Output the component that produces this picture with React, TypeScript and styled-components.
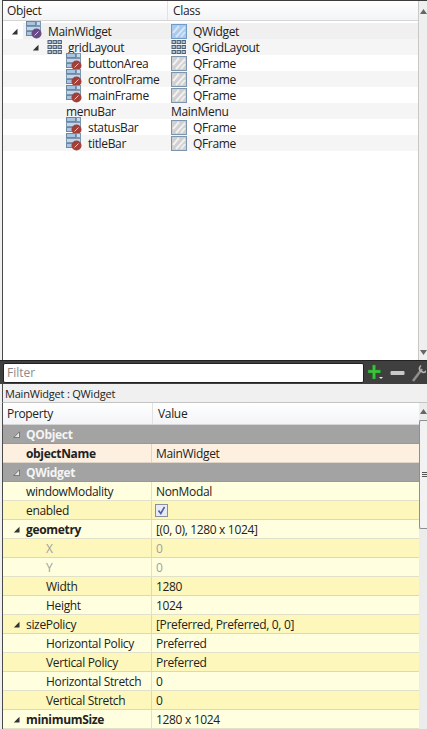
import styled, { createGlobalStyle } from 'styled-components';

const GlobalStyle = createGlobalStyle`
  html, body {
    margin: 0;
    padding: 0;
    background: #f0f0f0;
  }
  * {
    box-sizing: border-box;
  }
`;

const Page = styled.div`
  width: 427px;
  height: 729px;
  overflow: hidden;
  display: flex;
  flex-direction: column;
  font-family: "Open Sans", "Noto Sans", sans-serif;
  font-size: 12px;
  letter-spacing: -0.33px;
  color: #222;
  background: #f0f0f0;
`;

const TreePanel = styled.section`
  height: 360px;
  flex: none;
  display: flex;
  border-top: 1px solid #3c3c3c;
  border-left: 1px solid #4a4a4a;
  margin-left: 2px;
  background: #fff;
`;

const TreeBody = styled.div`
  flex: 1;
  min-width: 0;
  border-right: 1px solid #c8c8c8;
`;

const HeaderRow = styled.div<{ $split: number; $height: number }>`
  height: ${(p) => p.$height}px;
  display: grid;
  grid-template-columns: ${(p) => p.$split}px 1fr;
  align-items: center;
  background: linear-gradient(#ffffff, #f3f4f6);
  border-bottom: 1px solid #d5d5d5;
`;

const HeaderCell = styled.div`
  height: 100%;
  display: flex;
  align-items: center;
  padding-left: 5px;
  border-left: 1px solid #e2e2e2;
  &:first-child {
    border-left: none;
    padding-left: 4px;
  }
`;

const TreeList = styled.div`
  margin-top: 2px;
`;

const TreeRow = styled.div`
  height: 16px;
  display: grid;
  grid-template-columns: 164px 1fr;
  align-items: center;
  &:nth-child(even) {
    background: #f5f5f5;
  }
  &:first-child {
    background: linear-gradient(to right, #fff 20px, #f0f0f0 20px);
  }
`;

const ObjectCell = styled.div<{ $indent: number }>`
  display: flex;
  align-items: center;
  height: 16px;
  padding-left: ${(p) => p.$indent}px;
  white-space: nowrap;
`;

const ClassCell = styled.div`
  display: flex;
  align-items: center;
  height: 16px;
  padding-left: 4px;
  white-space: nowrap;
`;

const ArrowSlot = styled.span`
  width: 15px;
  flex: none;
  display: flex;
  align-items: center;
`;

const IconLabel = styled.span`
  margin-left: 6px;
`;

const ScrollBar = styled.div`
  width: 8px;
  flex: none;
  background: #efefef;
  display: flex;
  flex-direction: column;
  justify-content: space-between;
  align-items: center;
  padding: 8px 0 5px;
`;

const FilterBar = styled.div`
  height: 24px;
  flex: none;
  display: flex;
  align-items: center;
  gap: 3px;
  padding-left: 3px;
  background: #3f3f3f;
  border-top: 1px solid #222;
  overflow: hidden;
`;

const FilterInput = styled.input`
  width: 361px;
  height: 20px;
  flex: none;
  border: 1px solid #222;
  border-radius: 2px;
  padding: 0 3px;
  font: inherit;
  background: #fff;
  &::placeholder {
    color: #8a8a8a;
  }
`;

const ToolIcons = styled.div`
  display: flex;
  align-items: center;
  gap: 7px;
`;

const TitleStrip = styled.div`
  height: 19px;
  flex: none;
  display: flex;
  align-items: center;
  padding-left: 2px;
  margin-left: 2px;
  font-size: 11px;
  letter-spacing: -0.2px;
  background: #f0f0f0;
  border-left: 1px solid #4a4a4a;
  border-bottom: 1px solid #c4c4c4;
`;

const PropertyPanel = styled.section`
  flex: 1;
  min-height: 0;
  display: flex;
  margin-left: 2px;
  border-left: 1px solid #4a4a4a;
  background: #fff;
`;

const PropertyBody = styled.div`
  flex: 1;
  min-width: 0;
`;

const PropertyRow = styled.div<{ $bg: string }>`
  height: 19px;
  display: grid;
  grid-template-columns: 149px 1fr;
  background: ${(p) => p.$bg};
  border-bottom: 1px solid rgba(120, 120, 120, 0.22);
`;

const NameCell = styled.div<{ $indent: number; $bold?: boolean; $group?: boolean; $muted?: boolean }>`
  display: flex;
  align-items: center;
  padding-left: ${(p) => p.$indent}px;
  font-weight: ${(p) => (p.$bold ? 700 : 400)};
  color: ${(p) => (p.$group ? '#f4f4f4' : p.$muted ? '#a0a0a0' : '#222')};
  border-right: 1px solid ${(p) => (p.$group ? 'transparent' : 'rgba(120, 120, 120, 0.22)')};
  white-space: nowrap;
`;

const ValueCell = styled.div<{ $muted?: boolean }>`
  display: flex;
  align-items: center;
  padding-left: 4px;
  color: ${(p) => (p.$muted ? '#a0a0a0' : '#222')};
  white-space: nowrap;
`;

const PropArrow = styled.span`
  width: 13px;
  flex: none;
  margin-left: -13px;
  display: flex;
  align-items: center;
`;

const PropScroll = styled.div`
  width: 8px;
  flex: none;
  background: #ececec;
  display: flex;
  flex-direction: column;
  align-items: center;
  padding-top: 6px;
`;

const ScrollThumb = styled.div`
  height: 109px;
  align-self: stretch;
  margin-top: 6px;
  background: #f2f2f2;
  border: 1px solid #8f8f8f;
  border-right: none;
  border-radius: 2px 0 0 2px;
  display: flex;
  flex-direction: column;
  gap: 1px;
  align-items: flex-end;
  justify-content: center;
`;

const GripLine = styled.span`
  width: 5px;
  height: 1px;
  background: #555;
`;

const ExpandArrow = ({ light }: { light?: boolean }) => (
  <svg width="7" height="7" viewBox="0 0 7 7">
    <path d="M6.5 .8V6.5H.8Z" fill={light ? '#e8e8e8' : '#333'} stroke={light ? '#444' : 'none'} strokeWidth="0.6" />
  </svg>
);

const ScrollArrow = ({ down }: { down?: boolean }) => (
  <svg width="7" height="5" viewBox="0 0 7 5">
    <path d={down ? 'M0 0H7L3.5 5Z' : 'M0 5H7L3.5 0Z'} fill="#666" />
  </svg>
);

// stacked form windows with the round red "broken" badge
const WidgetIcon = ({ badge = '#a23f38' }: { badge?: string }) => (
  <svg width="16" height="18" viewBox="0 0 16 18" style={{ marginTop: -3, flex: 'none' }}>
    <rect x="0.5" y="0.5" width="9" height="4" fill="#a8c4de" stroke="#6c87a4" />
    <rect x="10.5" y="0.5" width="4" height="4" fill="#c4d9ee" stroke="#7c96b2" />
    <rect x="0.5" y="5.5" width="14" height="4" fill="#c2d6e8" stroke="#7c96b2" />
    <rect x="0.5" y="10.5" width="6" height="4" fill="#a8c4de" stroke="#6c87a4" />
    <circle cx="10.5" cy="12.5" r="5" fill={badge} />
    <path d="M8.5 14.5L12.5 10.5" stroke="#e8c9c9" strokeWidth="1" />
  </svg>
);

const FrameIcon = ({ blue }: { blue?: boolean }) => (
  <svg width="16" height="15" viewBox="0 0 16 15" style={{ flex: 'none' }}>
    <rect x="0.5" y="0.5" width="15" height="14" fill={blue ? '#a8c8ec' : '#cfcfcf'} stroke={blue ? '#6f9bcb' : '#7c94ac'} />
    <path
      d="M2 9L8 2M5 13L14 3M10 13L14 8"
      stroke={blue ? '#d6e6f6' : '#f0f0f0'}
      strokeWidth="2"
      fill="none"
    />
  </svg>
);

const GridIcon = () => (
  <svg width="15" height="14" viewBox="0 0 15 14" style={{ flex: 'none' }}>
    {[0, 1, 2].map((r) =>
      [0, 1, 2].map((c) => (
        <rect
          key={`${r}-${c}`}
          x={1 + c * 5}
          y={0.5 + r * 5}
          width="3.4"
          height="3"
          fill="#b4c8dc"
          stroke="#4f6172"
          strokeWidth="1"
        />
      )),
    )}
  </svg>
);

const PlusIcon = () => (
  <svg width="16" height="17" viewBox="0 0 16 17">
    <path d="M5.5 1h3v5h5v3h-5v6h-3V9H1V6h4.5z" fill="#3ec23e" stroke="#1e8c1e" strokeWidth="0.5" />
    <path d="M12 13h4l-2 2z" fill="#e8e8e8" />
  </svg>
);

const MinusIcon = () => (
  <svg width="15" height="6" viewBox="0 0 15 6">
    <rect x="0.5" y="1" width="14" height="4" rx="1" fill="#c9c9c9" />
  </svg>
);

const WrenchIcon = () => (
  <svg width="14" height="18" viewBox="0 0 14 18">
    <path d="M1 17L10 5" stroke="#8f8f8f" strokeWidth="2.5" />
    <path d="M9 1.5a4 4 0 0 0-1 5l3 2a4 4 0 0 0 4-3" stroke="#b4b4b4" strokeWidth="1.6" fill="none" />
  </svg>
);

const CheckBox = () => (
  <svg width="13" height="13" viewBox="0 0 13 13" style={{ marginLeft: -1 }}>
    <rect x="0.5" y="0.5" width="12" height="12" fill="#e8ebf3" stroke="#8a8f9c" />
    <path d="M3.5 6.5L5.8 9.5L9.5 3" stroke="#4a5fa8" strokeWidth="1.6" fill="none" />
  </svg>
);

type TreeItem = {
  name: string;
  indent: number;
  arrow?: boolean;
  icon?: 'main' | 'grid' | 'frame';
  className: string;
  classIcon?: 'widget' | 'grid' | 'frame';
};

const treeItems: TreeItem[] = [
  { name: 'MainWidget', indent: 8, arrow: true, icon: 'main', className: 'QWidget', classIcon: 'widget' },
  { name: 'gridLayout', indent: 29, arrow: true, icon: 'grid', className: 'QGridLayout', classIcon: 'grid' },
  { name: 'buttonArea', indent: 63, icon: 'frame', className: 'QFrame', classIcon: 'frame' },
  { name: 'controlFrame', indent: 63, icon: 'frame', className: 'QFrame', classIcon: 'frame' },
  { name: 'mainFrame', indent: 63, icon: 'frame', className: 'QFrame', classIcon: 'frame' },
  { name: 'menuBar', indent: 63, className: 'MainMenu' },
  { name: 'statusBar', indent: 63, icon: 'frame', className: 'QFrame', classIcon: 'frame' },
  { name: 'titleBar', indent: 63, icon: 'frame', className: 'QFrame', classIcon: 'frame' },
];

type PropItem = {
  name: string;
  value?: string;
  kind: 'group' | 'peach' | 'a' | 'b';
  indent: number;
  arrow?: boolean;
  bold?: boolean;
  muted?: boolean;
  check?: boolean;
};

const propItems: PropItem[] = [
  { name: 'QObject', kind: 'group', indent: 23, arrow: true, bold: true },
  { name: 'objectName', value: 'MainWidget', kind: 'peach', indent: 23, bold: true },
  { name: 'QWidget', kind: 'group', indent: 23, arrow: true, bold: true },
  { name: 'windowModality', value: 'NonModal', kind: 'a', indent: 23 },
  { name: 'enabled', kind: 'b', indent: 23, check: true },
  { name: 'geometry', value: '[(0, 0), 1280 x 1024]', kind: 'a', indent: 23, arrow: true, bold: true },
  { name: 'X', value: '0', kind: 'b', indent: 43, muted: true },
  { name: 'Y', value: '0', kind: 'a', indent: 43, muted: true },
  { name: 'Width', value: '1280', kind: 'b', indent: 43 },
  { name: 'Height', value: '1024', kind: 'a', indent: 43 },
  { name: 'sizePolicy', value: '[Preferred, Preferred, 0, 0]', kind: 'b', indent: 23, arrow: true },
  { name: 'Horizontal Policy', value: 'Preferred', kind: 'a', indent: 43 },
  { name: 'Vertical Policy', value: 'Preferred', kind: 'b', indent: 43 },
  { name: 'Horizontal Stretch', value: '0', kind: 'a', indent: 43 },
  { name: 'Vertical Stretch', value: '0', kind: 'b', indent: 43 },
  { name: 'minimumSize', value: '1280 x 1024', kind: 'a', indent: 23, arrow: true, bold: true },
];

const rowColors = {
  group: '#a3a3a3',
  peach: '#fdf0e0',
  a: '#ffffe0',
  b: '#fdf7bb',
};

const App = () => (
  <Page>
    <GlobalStyle />
    <TreePanel>
      <TreeBody>
        <HeaderRow $split={164} $height={20}>
          <HeaderCell>Object</HeaderCell>
          <HeaderCell>Class</HeaderCell>
        </HeaderRow>
        <TreeList>
          {treeItems.map((item) => (
            <TreeRow key={item.name}>
              <ObjectCell $indent={item.indent}>
                {item.arrow && (
                  <ArrowSlot>
                    <ExpandArrow />
                  </ArrowSlot>
                )}
                {item.icon === 'main' && <WidgetIcon badge="#6a4a86" />}
                {item.icon === 'grid' && <GridIcon />}
                {item.icon === 'frame' && <WidgetIcon />}
                {item.icon ? <IconLabel>{item.name}</IconLabel> : item.name}
              </ObjectCell>
              <ClassCell>
                {item.classIcon === 'widget' && <FrameIcon blue />}
                {item.classIcon === 'grid' && <GridIcon />}
                {item.classIcon === 'frame' && <FrameIcon />}
                {item.classIcon ? <IconLabel>{item.className}</IconLabel> : item.className}
              </ClassCell>
            </TreeRow>
          ))}
        </TreeList>
      </TreeBody>
      <ScrollBar>
        <ScrollArrow />
        <ScrollArrow down />
      </ScrollBar>
    </TreePanel>
    <FilterBar>
      <FilterInput placeholder="Filter" readOnly />
      <ToolIcons>
        <PlusIcon />
        <MinusIcon />
        <WrenchIcon />
      </ToolIcons>
    </FilterBar>
    <TitleStrip>MainWidget : QWidget</TitleStrip>
    <PropertyPanel>
      <PropertyBody>
        <HeaderRow $split={149} $height={22}>
          <HeaderCell>Property</HeaderCell>
          <HeaderCell>Value</HeaderCell>
        </HeaderRow>
        {propItems.map((p) => (
          <PropertyRow key={p.name} $bg={rowColors[p.kind]}>
            <NameCell $indent={p.indent} $bold={p.bold} $group={p.kind === 'group'} $muted={p.muted}>
              {p.arrow && (
                <PropArrow>
                  <ExpandArrow light={p.kind === 'group'} />
                </PropArrow>
              )}
              {p.name}
            </NameCell>
            <ValueCell $muted={p.muted}>{p.check ? <CheckBox /> : p.value}</ValueCell>
          </PropertyRow>
        ))}
      </PropertyBody>
      <PropScroll>
        <ScrollArrow />
        <ScrollThumb>
          <GripLine />
          <GripLine />
          <GripLine />
        </ScrollThumb>
      </PropScroll>
    </PropertyPanel>
  </Page>
);

export default App;
